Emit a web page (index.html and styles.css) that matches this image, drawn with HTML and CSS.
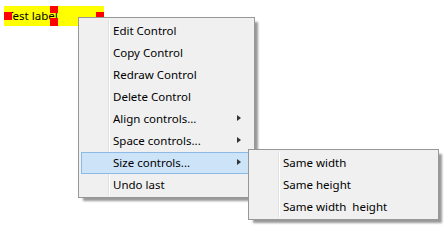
FILE: index.html
```html
<!DOCTYPE html>
<html lang="en">
<head>
    <meta charset="UTF-8">
    <title>Form designer</title>
    <link rel="stylesheet" href="styles.css">
</head>
<body>

<div class="canvas">
    <!-- selected control with its resize handles -->
    <div class="label-ctl">
        Test label
        <span class="handle h-left"></span>
        <span class="handle h-top"></span>
        <span class="handle h-bottom"></span>
        <span class="handle h-right"></span>
    </div>

    <ul class="menu main-menu">
        <li class="item">Edit Control</li>
        <li class="item">Copy Control</li>
        <li class="item">Redraw Control</li>
        <li class="item">Delete Control</li>
        <li class="item sub">Align controls...</li>
        <li class="item sub">Space controls...</li>
        <li class="item sub active">Size controls...
            <ul class="menu sub-menu">
                <li class="item">Same width</li>
                <li class="item">Same height</li>
                <li class="item">Same width&nbsp; height</li>
            </ul>
        </li>
        <li class="item">Undo last</li>
    </ul>
</div>

</body>
</html>
```

FILE: styles.css
```css
body, html {
    margin: 0;
    padding: 0;
    background-color: #ffffff;
    font-family: "Noto Sans", "Open Sans", sans-serif;
    font-size: 11.5px;
    color: #000;
}
.canvas {
    position: relative;
    width: 444px;
    height: 227px;
    overflow: hidden;
}
.label-ctl {
    position: relative;
    margin: 6px 0 0 4px;
    width: 97px;
    height: 20px;
    padding-left: 3px;
    line-height: 20px;
    background-color: #ffff00;
    white-space: nowrap;
}
.handle {
    position: absolute;
    width: 8px;
    height: 8px;
    background-color: #ff0000;
}
.h-left { left: 0; top: 6px; }
.h-right { right: 0; top: 6px; }
.h-top { left: 46px; top: 0; height: 7px; }
.h-bottom { left: 46px; bottom: 0; }

.menu {
    position: absolute;
    list-style: none;
    margin: 0;
    padding: 2px 5px 1px 2px;
    background-color: #f0f0f0;
    border: 1px solid #979797;
    box-shadow: 4px 4px 2px -1px rgba(0, 0, 0, 0.4);
    white-space: nowrap;
}
/* icon column divider */
.menu::before {
    content: "";
    position: absolute;
    left: 29px;
    top: 2px;
    bottom: 2px;
    width: 1px;
    background-color: #e0e0e0;
    border-right: 1px solid #ffffff;
}
.main-menu {
    left: 78px;
    top: 17px;
    width: 168px;
}
.sub-menu {
    left: 166px;
    top: -4px;
    width: 182px;
}
.item {
    position: relative;
    height: 22px;
    line-height: 19px;
    padding-left: 31px;
    border: 1px solid transparent;
    box-sizing: border-box;
}
.item.sub::after {
    content: "";
    position: absolute;
    right: 7px;
    top: 6px;
    border-left: 4px solid #333;
    border-top: 3.5px solid transparent;
    border-bottom: 3.5px solid transparent;
}
.item.active {
    background-color: #cde3f7;
    border-color: #8dbbe9;
}
.sub-menu .item {
    background: none;
    border-color: transparent;
}
```
